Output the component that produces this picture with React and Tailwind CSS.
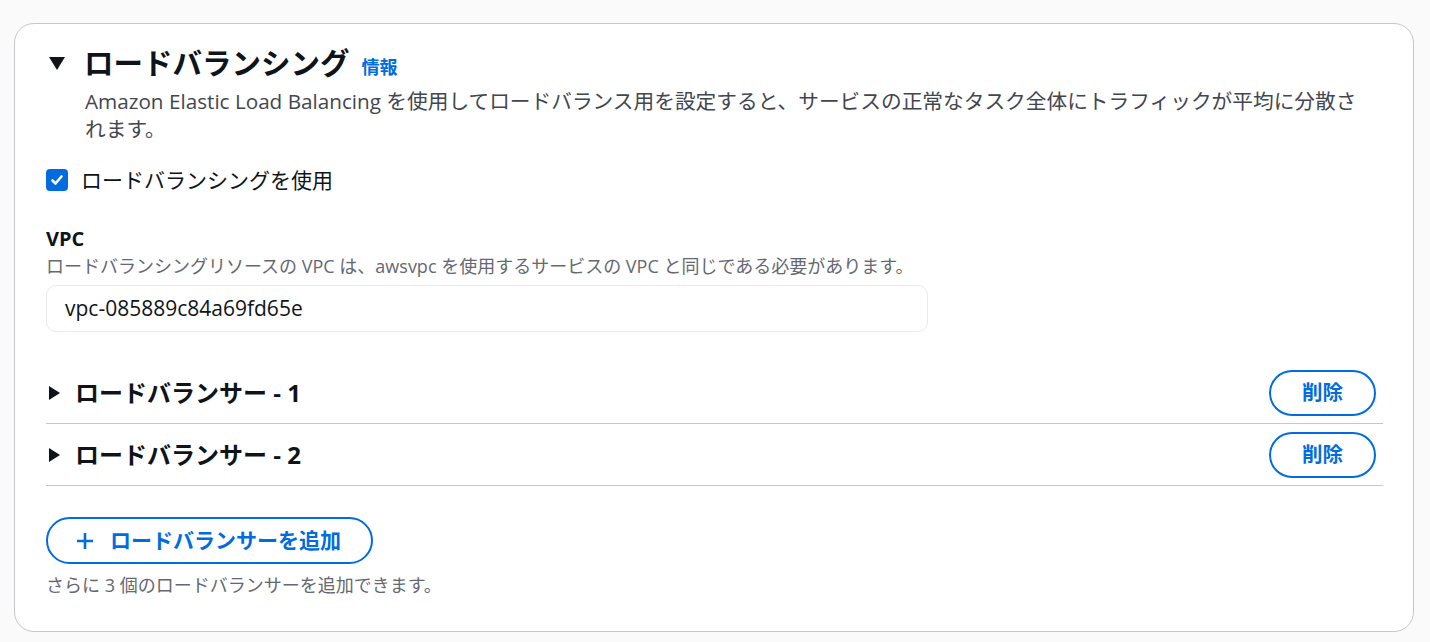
import React from "react";

const font = { fontFamily: '"Open Sans", "Noto Sans CJK JP", sans-serif' };

function Caret({ down }) {
  return down ? (
    <svg width="18" height="16" viewBox="0 0 18 16"><path d="M1 2 H17 L9 15 Z" fill="#0f141a" /></svg>
  ) : (
    <svg width="13" height="16" viewBox="0 0 13 16"><path d="M1 1 L12 8 L1 15 Z" fill="#0f141a" /></svg>
  );
}

function LbRow({ n }) {
  return (
    <div className="flex items-center justify-between h-[62px] border-b border-[#c6c6cd]">
      <div className="flex items-center gap-[14px] pl-[2px]">
        <Caret />
        <span className="text-[24px] font-bold text-[#0f141a]">ロードバランサー - {n}</span>
      </div>
      <button className="mr-[7px] h-[46px] w-[107px] rounded-full border-2 border-[#006ce0] text-[20.5px] font-bold text-[#006ce0] bg-white">
        削除
      </button>
    </div>
  );
}

export default function App() {
  return (
    <div className="min-h-[642px] bg-[#fafafa] pl-[14px] pr-[16px] pt-[23px] pb-[10px]" style={font}>
      <div className="rounded-[20px] border border-[#c6c6cd] bg-white pl-[31px] pr-[30px] pt-[21px] pb-[33px]">
        <div className="flex items-center gap-[18px] pl-[2px]">
          <Caret down />
          <div className="flex items-baseline gap-[12px]">
            <h2 className="text-[29.5px] leading-[36px] font-bold text-[#0f141a]">ロードバランシング</h2>
            <a className="text-[18px] font-bold text-[#006ce0]">情報</a>
          </div>
        </div>
        <p className="ml-[39px] mr-[18px] mt-[6px] text-[20.7px] leading-[28px] text-[#424650]">
          Amazon Elastic Load Balancing を使用してロードバランス用を設定すると、サービスの正常なタスク全体にトラフィックが平均に分散されます。
        </p>
        <label className="mt-[23px] flex items-center gap-[13px]">
          <span className="flex h-[22px] w-[22px] items-center justify-center rounded-[4px] bg-[#006ce0]">
            <svg width="16" height="16" viewBox="0 0 16 16"><path d="M3.5 8.5 L6.5 11.5 L12.5 4.5" fill="none" stroke="white" strokeWidth="2.6" strokeLinecap="round" strokeLinejoin="round" /></svg>
          </span>
          <span className="text-[21px] leading-[28px] text-[#0f141a]">ロードバランシングを使用</span>
        </label>
        <div className="mt-[31px]">
          <div className="text-[20px] font-bold leading-[28px] text-[#0f141a]">VPC</div>
          <div className="text-[18px] leading-[26px] text-[#656871]">
            ロードバランシングリソースの VPC は、awsvpc を使用するサービスの VPC と同じである必要があります。
          </div>
          <div className="mt-[6px] flex h-[47px] w-[882px] items-center rounded-[10px] border border-[#e9ebed] px-[18px] text-[21px] text-[#0f141a]">
            vpc-085889c84a69fd65e
          </div>
        </div>
        <div className="mt-[30px]">
          <LbRow n={1} />
          <LbRow n={2} />
        </div>
        <button className="mt-[31px] flex h-[47px] w-[327px] items-center gap-[16px] rounded-full border-2 border-[#006ce0] pl-[28px] bg-white">
          <svg width="18" height="18" viewBox="0 0 18 18"><path d="M9 1 V17 M1 9 H17" stroke="#006ce0" strokeWidth="2.6" /></svg>
          <span className="text-[21px] font-bold text-[#006ce0]">ロードバランサーを追加</span>
        </button>
        <div className="mt-[8px] text-[18px] leading-[26px] text-[#656871]">さらに 3 個のロードバランサーを追加できます。</div>
      </div>
    </div>
  );
}
